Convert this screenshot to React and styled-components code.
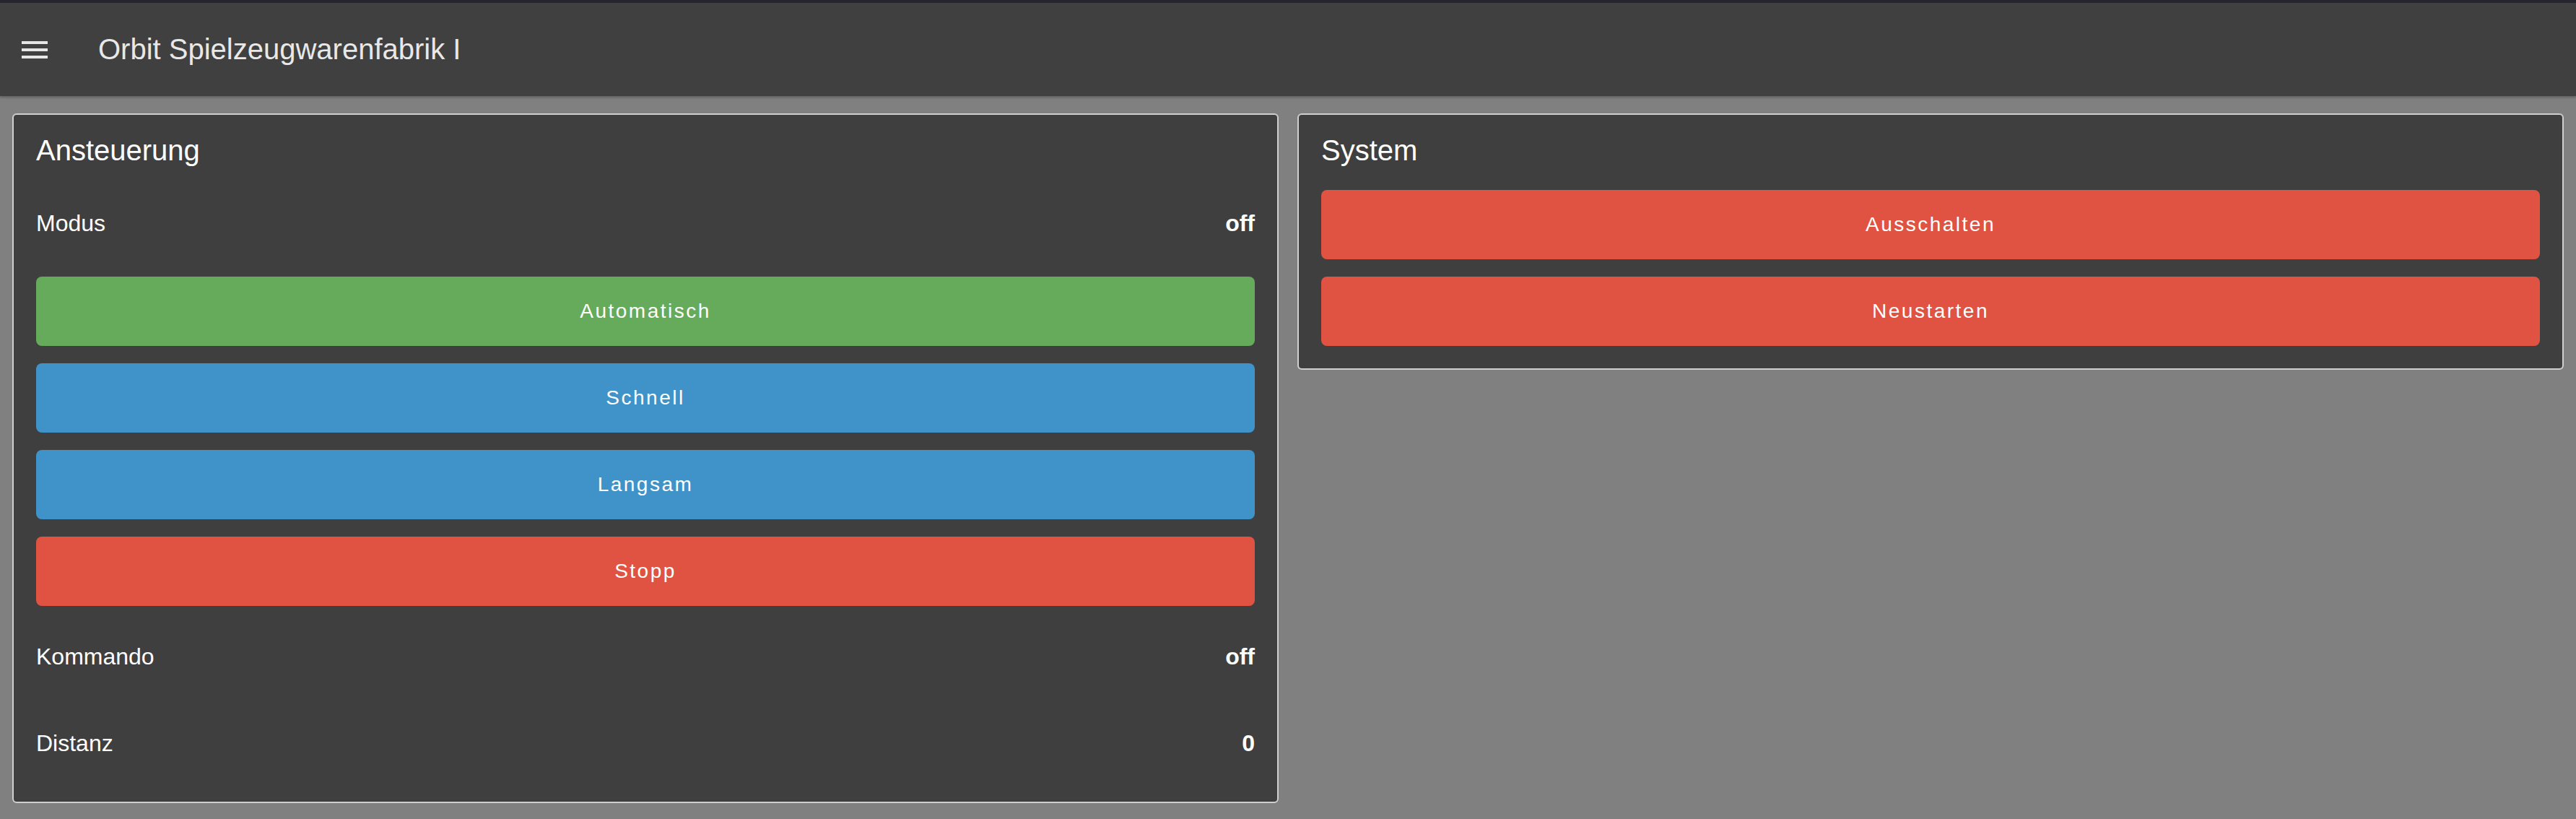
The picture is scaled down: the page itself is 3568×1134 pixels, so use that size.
import React from 'react';
import styled, { createGlobalStyle } from 'styled-components';

const GlobalStyle = createGlobalStyle`
  html, body {
    margin: 0;
    padding: 0;
    background-color: #808080;
    font-family: "Liberation Sans", Arial, sans-serif;
  }
`;

const Page = styled.div`
  height: 1134px;
  overflow: hidden;
  background-color: #808080;
`;

const TopStrip = styled.div`
  height: 4px;
  background-color: #25252f;
`;

const Header = styled.header`
  display: flex;
  align-items: center;
  height: 129px;
  padding-left: 24px;
  background-color: #404040;
  box-shadow: 0 2px 3px rgba(0, 0, 0, 0.25);
  position: relative;
  z-index: 1;
`;

const MenuButton = styled.div`
  display: flex;
  align-items: center;
  justify-content: center;
  width: 48px;
  height: 48px;
`;

const AppTitle = styled.h1`
  margin: 0 0 0 64px;
  font-size: 40px;
  font-weight: 400;
  color: #e8e8e8;
  white-space: nowrap;
`;

const Content = styled.main`
  display: grid;
  grid-template-columns: 1fr 1fr;
  gap: 26px;
  align-items: start;
  padding: 24px 17px 0;
`;

const Card = styled.section`
  background-color: #3f3f3f;
  border: 2px solid #cfcfcf;
  border-radius: 6px;
  padding: 0 31px 31px;
`;

const CardTitle = styled.h2`
  margin: 0;
  padding: 25px 0 31px;
  font-size: 40px;
  line-height: 48px;
  font-weight: 400;
  color: #ffffff;
`;

const Stack = styled.div`
  display: flex;
  flex-direction: column;
  gap: 24px;
`;

const TextRow = styled.div`
  display: flex;
  align-items: center;
  justify-content: space-between;
  height: 92px;
  padding-bottom: 4px;
  font-size: 32px;
  color: #ffffff;
`;

const Value = styled.span`
  font-weight: 700;
`;

const colors = {
  green: '#66ab5b',
  blue: '#3f93c9',
  red: '#e05342',
};

const ActionButton = styled.button`
  display: flex;
  align-items: center;
  justify-content: center;
  height: 96px;
  border: none;
  border-radius: 8px;
  background-color: ${props => colors[props.$tone]};
  color: #ffffff;
  font-family: "Liberation Sans", Arial, sans-serif;
  font-size: 28px;
  letter-spacing: 2.5px;
  cursor: pointer;
`;

function MenuIcon() {
  return (
    <svg width="48" height="48" viewBox="0 0 48 48">
      <rect x="6" y="12" width="36" height="4" fill="#e6e6e6" />
      <rect x="6" y="22" width="36" height="4" fill="#e6e6e6" />
      <rect x="6" y="32" width="36" height="4" fill="#e6e6e6" />
    </svg>
  );
}

function App() {
  return (
    <Page>
      <GlobalStyle />
      <TopStrip />
      <Header>
        <MenuButton>
          <MenuIcon />
        </MenuButton>
        <AppTitle>Orbit Spielzeugwarenfabrik I</AppTitle>
      </Header>

      <Content>
        <Card>
          <CardTitle>Ansteuerung</CardTitle>
          <Stack>
            <TextRow>
              <span>Modus</span>
              <Value>off</Value>
            </TextRow>
            <ActionButton $tone="green">Automatisch</ActionButton>
            <ActionButton $tone="blue">Schnell</ActionButton>
            <ActionButton $tone="blue">Langsam</ActionButton>
            <ActionButton $tone="red">Stopp</ActionButton>
            <TextRow>
              <span>Kommando</span>
              <Value>off</Value>
            </TextRow>
            <TextRow>
              <span>Distanz</span>
              <Value>0</Value>
            </TextRow>
          </Stack>
        </Card>

        <Card>
          <CardTitle>System</CardTitle>
          <Stack>
            <ActionButton $tone="red">Ausschalten</ActionButton>
            <ActionButton $tone="red">Neustarten</ActionButton>
          </Stack>
        </Card>
      </Content>
    </Page>
  );
}

export default App;
